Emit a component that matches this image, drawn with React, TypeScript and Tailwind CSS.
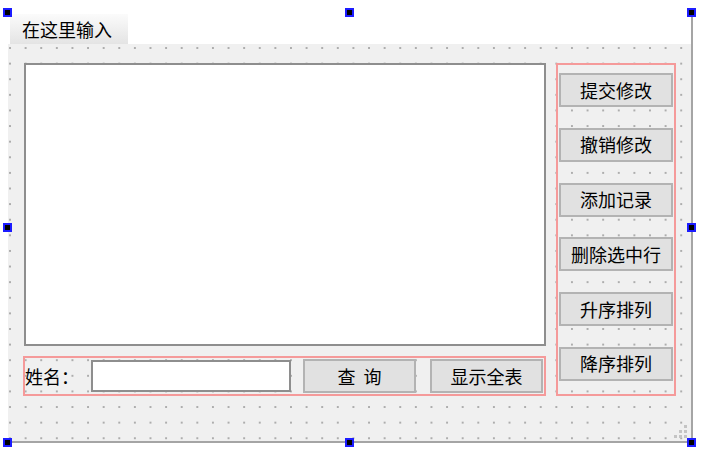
import type { ReactNode } from 'react';

const FONT = { fontFamily: '"Noto Sans CJK SC", "Noto Sans", sans-serif' };

const GRID =
  'bg-[radial-gradient(circle,#adadad_0.9px,transparent_1.1px)] bg-[length:15.62px_15.62px] bg-[position:-5.8px_-3.8px]';

function Handle({ className }: { className: string }) {
  return <div className={`absolute w-[9px] h-[9px] bg-black border-2 border-[#1c1cff] ${className}`} />;
}

function Btn({ children, className = '' }: { children: ReactNode; className?: string }) {
  return (
    <div className={`h-[34px] flex items-center justify-center bg-[#e1e1e1] border-2 border-[#b3b3b3] text-[18px] text-black ${className}`}>
      {children}
    </div>
  );
}

export default function App() {
  const sideButtons = ['提交修改', '撤销修改', '添加记录', '删除选中行', '升序排列', '降序排列'];

  return (
    <div className="relative w-[702px] h-[453px] bg-white overflow-hidden" style={FONT}>
      <div className="pl-[8px] pt-[12px] w-[693px]">
        {/* menu bar */}
        <div className="h-[32px] pl-[2px] pt-[2px] border-r-2 border-[#a5a5a5] bg-white">
          <div className="w-[118px] h-[30px] flex items-center pl-[12px] bg-gradient-to-b from-[#fbfbfb] to-[#e4e4e4] text-[18px] leading-none text-black">
            在这里输入
          </div>
        </div>

        {/* form body */}
        <div className={`relative h-[399px] bg-[#f0f0f0] ${GRID} border-r-2 border-b-2 border-[#a5a5a5] flex gap-[10px] pl-[15px] pt-[19px]`}>
          <div className="w-[523px] h-[333px] flex flex-col gap-[10px]">
            <div className="ml-[1px] h-[283px] bg-white border-2 border-[#8e8e8e]" />
            <div className="h-[40px] border-2 border-[#f59a9a] flex items-center">
              <span className="w-[66px] text-[18px] text-black leading-none">姓名：</span>
              <div className="w-[200px] h-[32px] bg-white border-2 border-[#8e8e8e]" />
              <Btn className="w-[113px] ml-[12px] whitespace-pre">查  询</Btn>
              <Btn className="w-[113px] ml-[14px]">显示全表</Btn>
            </div>
          </div>

          <div className="w-[120px] h-[333px] border-2 border-[#f59a9a] flex flex-col justify-between px-[1px] pt-[8px] pb-[13px]">
            {sideButtons.map((t) => (
              <Btn key={t}>{t}</Btn>
            ))}
          </div>

          {/* size grip */}
          <svg className="absolute right-[3px] bottom-[2px]" width="14" height="14" viewBox="0 0 14 14">
            {[
              [10, 0],
              [10, 5],
              [5, 5],
              [10, 10],
              [5, 10],
              [0, 10],
            ].map(([x, y]) => (
              <rect key={`${x}-${y}`} x={x} y={y} width="3" height="3" fill="#c4c4c4" />
            ))}
          </svg>
        </div>
      </div>

      {/* selection handles */}
      <Handle className="left-[3px] top-[8px]" />
      <Handle className="left-[345px] top-[8px]" />
      <Handle className="left-[687px] top-[8px]" />
      <Handle className="left-[3px] top-[223px]" />
      <Handle className="left-[687px] top-[223px]" />
      <Handle className="left-[3px] top-[438px]" />
      <Handle className="left-[345px] top-[438px]" />
      <Handle className="left-[687px] top-[438px]" />
    </div>
  );
}
